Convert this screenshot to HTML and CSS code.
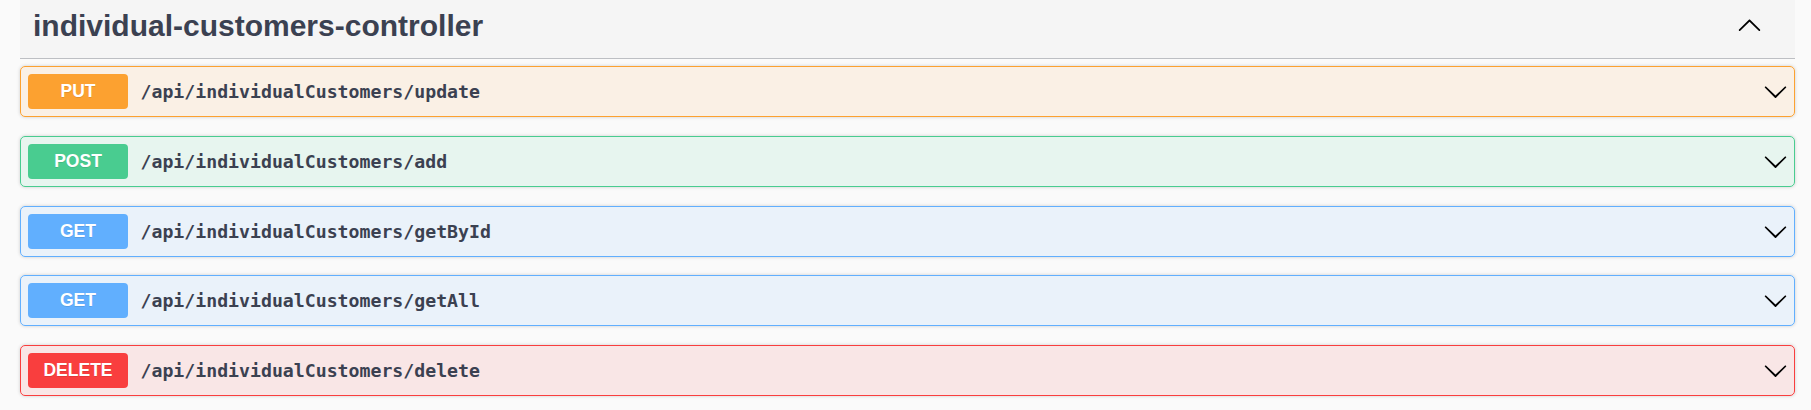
FILE: index.html
```html
<!DOCTYPE html>
<html lang="en">
<head>
<meta charset="utf-8">
<title>individual-customers-controller</title>
<link rel="stylesheet" href="styles.css">
</head>
<body>
<div class="wrapper">
  <div class="tag-section">
    <h3 class="opblock-tag">
      <span class="tag-title">individual-customers-controller</span>
      <button class="expand-btn" aria-label="Collapse">
        <svg class="arrow" viewBox="0 0 20 20" width="25" height="25"><path d="M17.418 14.908c.272.27.709.27.979 0s.271-.68 0-.969l-7.908-7.83c-.27-.268-.707-.268-.979 0l-7.908 7.83c-.27.268-.27.701 0 .969.271.268.709.268.979 0L10 7.739l7.418 7.169z"/></svg>
      </button>
    </h3>
    <div class="operations">
      <div class="opblock opblock-put">
        <span class="method">PUT</span>
        <span class="path">/api/individualCustomers/update</span>
        <svg class="arrow" viewBox="0 0 20 20" width="25" height="25"><path d="M17.418 6.109c.272-.268.709-.268.979 0s.271.701 0 .969l-7.908 7.83c-.27.268-.707.268-.979 0l-7.908-7.83c-.27-.268-.27-.701 0-.969.271-.268.709-.268.979 0L10 13.25l7.418-7.141z"/></svg>
      </div>
      <div class="opblock opblock-post">
        <span class="method">POST</span>
        <span class="path">/api/individualCustomers/add</span>
        <svg class="arrow" viewBox="0 0 20 20" width="25" height="25"><path d="M17.418 6.109c.272-.268.709-.268.979 0s.271.701 0 .969l-7.908 7.83c-.27.268-.707.268-.979 0l-7.908-7.83c-.27-.268-.27-.701 0-.969.271-.268.709-.268.979 0L10 13.25l7.418-7.141z"/></svg>
      </div>
      <div class="opblock opblock-get">
        <span class="method">GET</span>
        <span class="path">/api/individualCustomers/getById</span>
        <svg class="arrow" viewBox="0 0 20 20" width="25" height="25"><path d="M17.418 6.109c.272-.268.709-.268.979 0s.271.701 0 .969l-7.908 7.83c-.27.268-.707.268-.979 0l-7.908-7.83c-.27-.268-.27-.701 0-.969.271-.268.709-.268.979 0L10 13.25l7.418-7.141z"/></svg>
      </div>
      <div class="opblock opblock-get">
        <span class="method">GET</span>
        <span class="path">/api/individualCustomers/getAll</span>
        <svg class="arrow" viewBox="0 0 20 20" width="25" height="25"><path d="M17.418 6.109c.272-.268.709-.268.979 0s.271.701 0 .969l-7.908 7.83c-.27.268-.707.268-.979 0l-7.908-7.83c-.27-.268-.27-.701 0-.969.271-.268.709-.268.979 0L10 13.25l7.418-7.141z"/></svg>
      </div>
      <div class="opblock opblock-delete">
        <span class="method">DELETE</span>
        <span class="path">/api/individualCustomers/delete</span>
        <svg class="arrow" viewBox="0 0 20 20" width="25" height="25"><path d="M17.418 6.109c.272-.268.709-.268.979 0s.271.701 0 .969l-7.908 7.83c-.27.268-.707.268-.979 0l-7.908-7.83c-.27-.268-.27-.701 0-.969.271-.268.709-.268.979 0L10 13.25l7.418-7.141z"/></svg>
      </div>
    </div>
  </div>
</div>
</body>
</html>
```
FILE: styles.css
```css
html, body {
  margin: 0;
  padding: 0;
  background: #fafafa;
}

.wrapper {
  padding: 0 16px 0 20px;
}

.opblock-tag {
  display: flex;
  align-items: center;
  margin: 0;
  height: 58px;
  box-sizing: border-box;
  padding: 9px 33px 15px 13px;
  background: rgba(0, 0, 0, 0.02);
  border-bottom: 1px solid rgba(59, 65, 81, 0.3);
  color: #3b4151;
  font-family: "Liberation Sans", Arial, sans-serif;
  font-size: 30px;
  font-weight: 700;
  line-height: 34px;
  height: 59px;
}

.tag-title {
  flex: 1;
}

.expand-btn {
  display: flex;
  align-items: center;
  justify-content: center;
  border: 0;
  padding: 0;
  margin: 0 0 3px 0;
  background: transparent;
  width: 25px;
  height: 25px;
}

.arrow {
  display: block;
  fill: #000;
  flex: none;
}

.operations {
  padding-top: 7px;
}

.opblock {
  display: flex;
  align-items: center;
  height: 51px;
  box-sizing: border-box;
  padding: 0 6px 0 7px;
  margin-bottom: 18.75px;
  border: 1px solid;
  border-radius: 5px;
  box-shadow: 0 0 3.75px rgba(0, 0, 0, 0.19);
}

.method {
  display: flex;
  align-items: center;
  justify-content: center;
  width: 100px;
  height: 35px;
  border-radius: 4px;
  color: #fff;
  font-family: "Liberation Sans", Arial, sans-serif;
  font-size: 17.5px;
  font-weight: 700;
  text-shadow: 0 1px 0 rgba(0, 0, 0, 0.1);
  flex: none;
}

.path {
  flex: 1;
  padding: 0 12.5px;
  color: #3b4151;
  font-family: "DejaVu Sans Mono", "Liberation Mono", monospace;
  font-size: 18.2px;
  font-weight: 600;
}

.opblock-put {
  border-color: #fca130;
  background: rgba(252, 161, 48, 0.1);
}
.opblock-put .method { background: #fca130; }

.opblock-post {
  border-color: #49cc90;
  background: rgba(73, 204, 144, 0.1);
}
.opblock-post .method { background: #49cc90; }

.opblock-get {
  border-color: #61affe;
  background: rgba(97, 175, 254, 0.1);
}
.opblock-get .method { background: #61affe; }

.opblock-delete {
  border-color: #f93e3e;
  background: rgba(249, 62, 62, 0.1);
}
.opblock-delete .method { background: #f93e3e; }
```
